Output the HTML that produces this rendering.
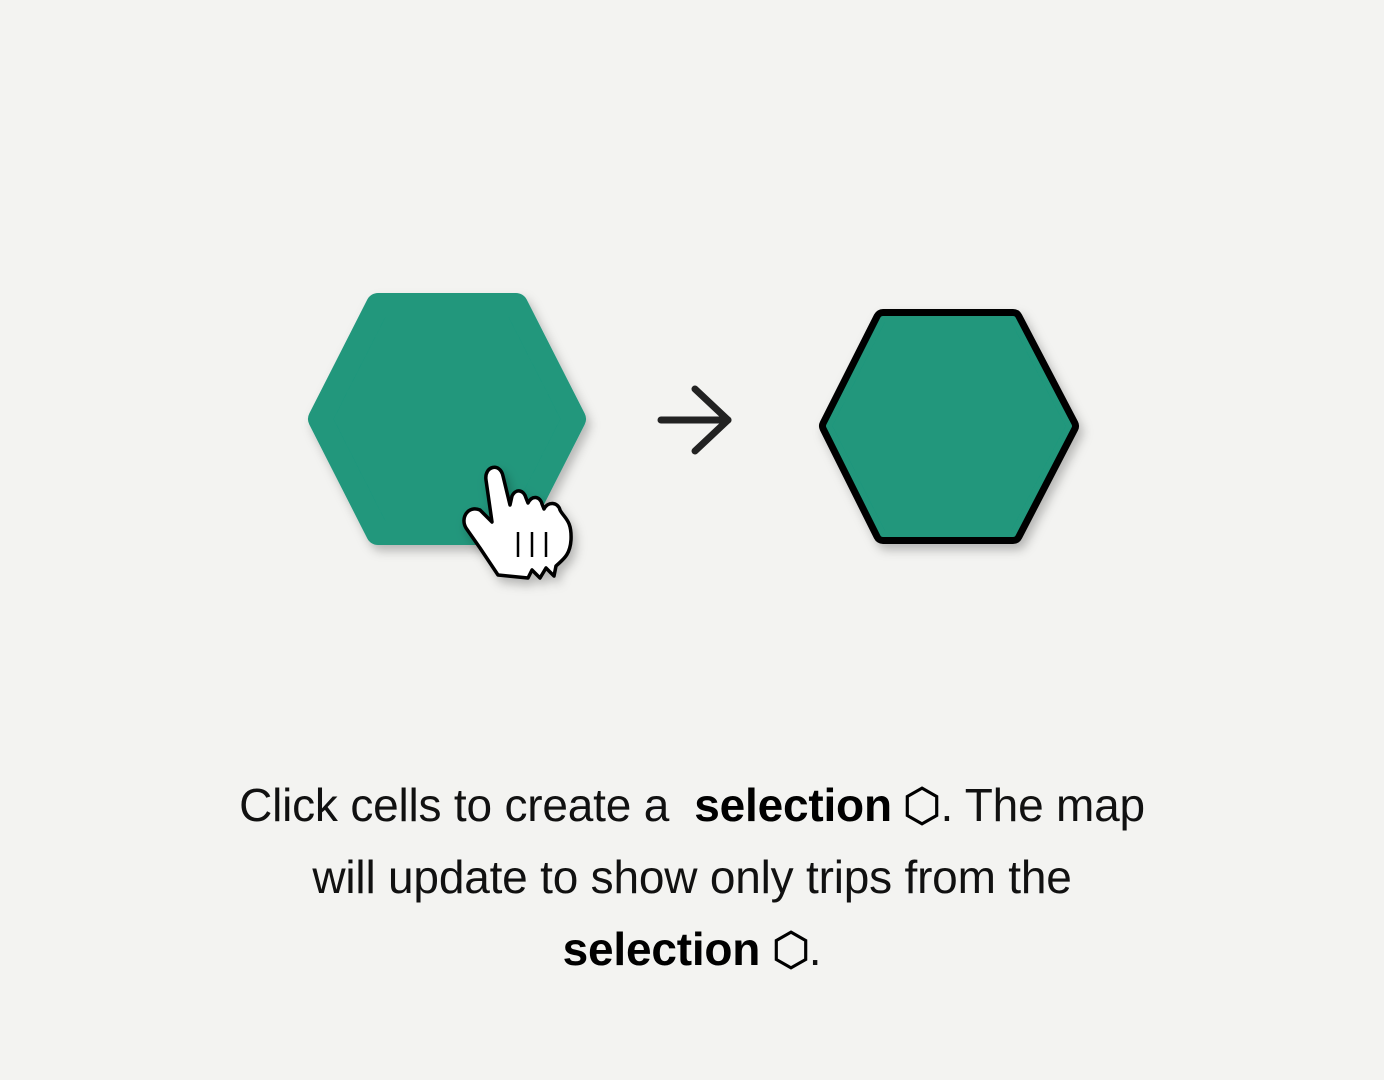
<!DOCTYPE html>
<html><head><meta charset="utf-8"><style>
html,body{margin:0;padding:0;width:1384px;height:1080px;background:#f3f3f1;overflow:hidden}
.l{position:absolute;left:0;width:1384px;text-align:center;font-family:"Liberation Sans",sans-serif;font-size:46px;color:#111;letter-spacing:-0.2px;white-space:nowrap}
b{font-weight:bold;color:#000}
.hx{display:inline-block;width:36px;height:42px;vertical-align:-6px}
</style></head><body>
<svg width="1384" height="1080" style="position:absolute;left:0;top:0">
<defs><filter id="s" x="-20%" y="-20%" width="140%" height="140%"><feDropShadow dx="4" dy="6" stdDeviation="5" flood-color="#000" flood-opacity="0.25"/></filter></defs>
<polygon points="378,305 516,305 574,419 516,533 378,533 320,419" fill="#20977c" stroke="#20977c" stroke-width="24" stroke-linejoin="round" filter="url(#s)"/>
<g filter="url(#s)">
<polygon points="883,319 1013,319 1069,426 1013,534 883,534 829,426" fill="#000" stroke="#000" stroke-width="20" stroke-linejoin="round"/>
<polygon points="883,319 1013,319 1069,426 1013,534 883,534 829,426" fill="#20977c" stroke="#20977c" stroke-width="6" stroke-linejoin="round"/>
</g>
<g stroke="#222" stroke-width="7" stroke-linecap="round" stroke-linejoin="round" fill="none">
<line x1="661" y1="420" x2="728" y2="420"/><polyline points="695,389 728,420 695,451"/>
</g>
<g filter="url(#s)">
<path d="M498,575 L480,548 L466,528 C460,518 468,505 480,510 L492,522 L486,480 C484,466 500,462 503,476 L510,505 L512,496 C516,488 524,490 526,498 L528,503 C532,495 540,496 542,504 L544,509 C548,501 558,502 560,510 C564,518 572,520 571,540 C570,556 562,560 556,566 L554,576 L546,568 L540,578 L532,570 L528,578 Z" fill="#fff" stroke="#000" stroke-width="3.5" stroke-linejoin="round"/>
</g>
<g stroke="#000" stroke-width="2.5"><line x1="518" y1="532" x2="518" y2="557"/><line x1="532" y1="532" x2="532" y2="557"/><line x1="546" y1="532" x2="546" y2="557"/></g>
</svg>
<div class="l" style="top:778px">Click cells to create a &nbsp;<b>selection</b> <svg class="hx" viewBox="0 0 34 40"><polygon points="17,3 31,11 31,29 17,37 3,29 3,11" fill="none" stroke="#000" stroke-width="3"/></svg>. The map</div>
<div class="l" style="top:850px">will update to show only trips from the</div>
<div class="l" style="top:922px"><b>selection</b> <svg class="hx" viewBox="0 0 34 40"><polygon points="17,3 31,11 31,29 17,37 3,29 3,11" fill="none" stroke="#000" stroke-width="3"/></svg>.</div>
</body></html>
